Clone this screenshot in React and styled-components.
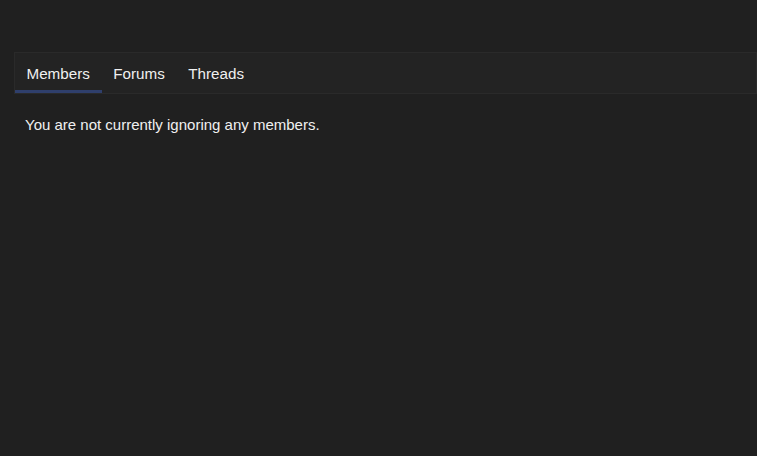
import React from 'react'
import styled, { createGlobalStyle } from 'styled-components'

const Global = createGlobalStyle`
  html, body {
    margin: 0;
    background: #202020;
    font-family: "Liberation Sans", Arial, sans-serif;
  }
`

const Page = styled.div`
  padding: 52px 0 0 14px;
  min-height: 456px;
  box-sizing: border-box;
  color: #ececec;
`

const TabBar = styled.div`
  display: flex;
  height: 42px;
  box-sizing: border-box;
  background: #232323;
  border: 1px solid #2a2a2a;
`

const Tab = styled.a`
  display: flex;
  align-items: center;
  padding: 3px 12px 0 11.5px;
  font-size: 15.2px;
  color: #f0f0f0;
  border-bottom: 3px solid ${p => (p.$active ? '#2f3f6c' : 'transparent')};
  cursor: pointer;
`

const Message = styled.p`
  margin: 0;
  padding: 22px 11px;
  font-size: 15px;
  color: #f0f0f0;
`

export default function App() {
  return (
    <Page>
      <Global />
      <TabBar>
        <Tab $active>Members</Tab>
        <Tab>Forums</Tab>
        <Tab>Threads</Tab>
      </TabBar>
      <Message>You are not currently ignoring any members.</Message>
    </Page>
  )
}
